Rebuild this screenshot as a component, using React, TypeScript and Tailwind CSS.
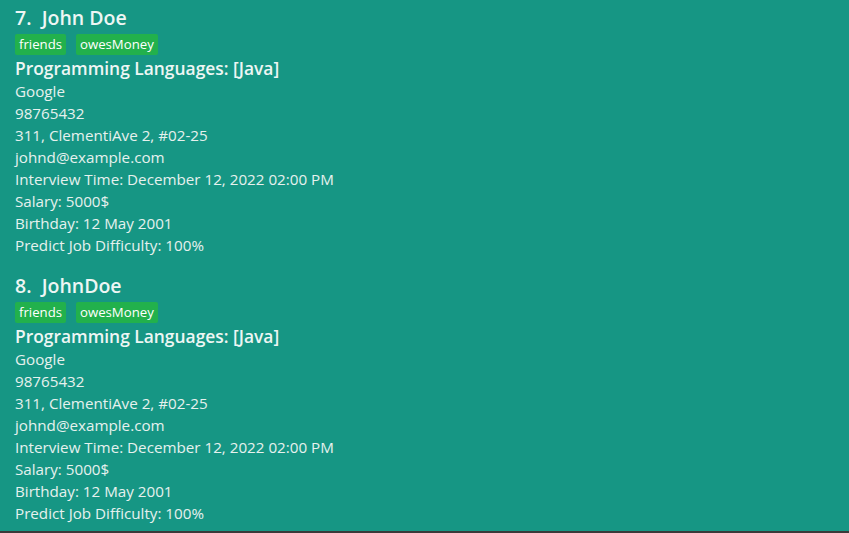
import React from 'react';

const people = [
  { index: 7, name: 'John Doe' },
  { index: 8, name: 'JohnDoe' },
];

const details = [
  'Google',
  '98765432',
  '311, ClementiAve 2, #02-25',
  'johnd@example.com',
  'Interview Time: December 12, 2022 02:00 PM',
  'Salary: 5000$',
  'Birthday: 12 May 2001',
  'Predict Job Difficulty: 100%',
];

const PersonCard = ({ index, name }: { index: number; name: string }) => (
  <div className="pl-[15px] pt-[6px] pb-[12px]">
    <div className="text-[19.5px] font-semibold leading-[24px] text-[#eef6f4]">
      {index}.&nbsp;&nbsp;{name}
    </div>
    <div className="flex gap-[10px] mt-[4px]">
      {['friends', 'owesMoney'].map((tag) => (
        <span
          key={tag}
          className="bg-[#22b14c] text-white text-[13.2px] leading-[21px] px-[4px] rounded-[2px]"
        >
          {tag}
        </span>
      ))}
    </div>
    <div className="text-[17.4px] font-semibold leading-[24px] mt-[1px] text-[#eef6f4]">
      Programming Languages: [Java]
    </div>
    <div className="flex flex-col">
      {details.map((line) => (
        <div key={line} className="text-[15.2px] leading-[22px] text-[#e6f1ee]">
          {line}
        </div>
      ))}
    </div>
  </div>
);

export default function App() {
  return (
    <div
      className="w-[849px] h-[533px] bg-[#169684] border-b-2 border-[#3a3a3a] overflow-hidden"
      style={{ fontFamily: '"Open Sans", "Noto Sans", sans-serif' }}
    >
      {people.map((p) => (
        <PersonCard key={p.index} index={p.index} name={p.name} />
      ))}
    </div>
  );
}
